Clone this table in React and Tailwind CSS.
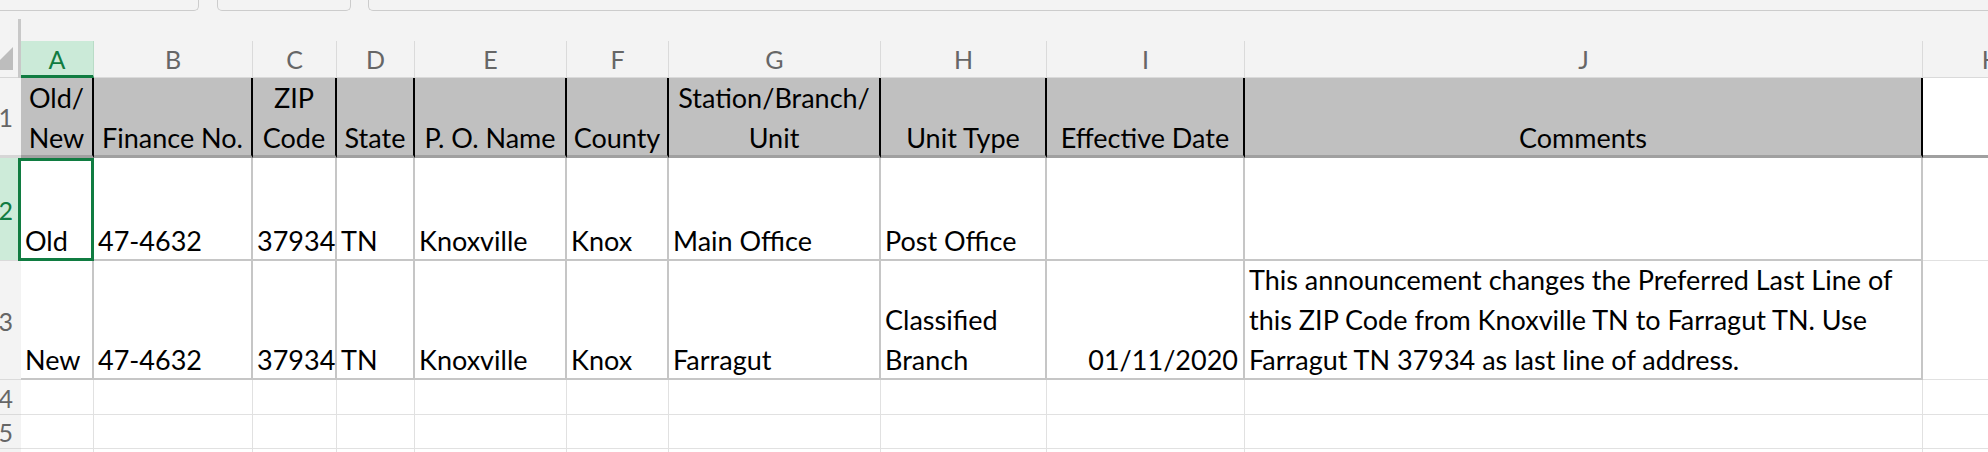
import React from 'react';

// column widths measured off the sheet (border included)
const COLS = [
  { id: 'A', w: 'w-[73px]' },
  { id: 'B', w: 'w-[159px]' },
  { id: 'C', w: 'w-[84px]' },
  { id: 'D', w: 'w-[78px]' },
  { id: 'E', w: 'w-[152px]' },
  { id: 'F', w: 'w-[102px]' },
  { id: 'G', w: 'w-[212px]' },
  { id: 'H', w: 'w-[166px]' },
  { id: 'I', w: 'w-[198px]' },
  { id: 'J', w: 'w-[678px]' },
];

const HEADERS = [
  ['Old/', 'New'],
  ['Finance No.'],
  ['ZIP', 'Code'],
  ['State'],
  ['P. O. Name'],
  ['County'],
  ['Station/Branch/', 'Unit'],
  ['Unit Type'],
  ['Effective Date'],
  ['Comments'],
];

const ROWS = [
  {
    n: 2,
    h: 'h-[103px]',
    cells: [['Old'], ['47-4632'], ['37934'], ['TN'], ['Knoxville'], ['Knox'], ['Main Office'], ['Post Office'], [], []],
  },
  {
    n: 3,
    h: 'h-[119px]',
    cells: [
      ['New'], ['47-4632'], ['37934'], ['TN'], ['Knoxville'], ['Knox'], ['Farragut'],
      ['Classified', 'Branch'],
      ['01/11/2020'],
      [
        'This announcement changes the Preferred Last Line of',
        'this ZIP Code from Knoxville TN to Farragut TN. Use',
        'Farragut TN 37934 as last line of address.',
      ],
    ],
  },
];

const EMPTY_ROWS = [
  { n: 4, h: 'h-[35px]' },
  { n: 5, h: 'h-[34px]' },
  { n: 6, h: 'h-[34px]' },
];

const RowHeader = ({ n, active, thick }) => (
  <div
    className={`w-[21px] h-full shrink-0 flex items-center justify-end overflow-hidden pr-[8px] pt-[2px] text-[25px] leading-none ${
      active ? 'bg-[#cdebd9] text-[#107c41]' : 'bg-[#f3f3f3] text-[#666666]'
    } ${thick ? 'border-b-[3px] border-[#d6d6d6]' : 'border-b border-[#dadada]'}`}
  >
    <span>{n}</span>
  </div>
);

const Lines = ({ lines, shift }) => (
  <div className={`leading-[40px] whitespace-nowrap ${shift}`}>
    {lines.map((l) => (
      <div key={l}>{l}</div>
    ))}
  </div>
);

export default function App() {
  return (
    <div className="w-[1988px] h-[452px] overflow-hidden bg-white font-[Lato,sans-serif] text-[27px] text-black">
      {/* ribbon edge */}
      <div className="h-[19px] bg-[#f3f3f3] flex items-start">
        <div className="w-[199px] h-[11px] border-r border-b border-[#cccccc] rounded-br-[5px]" />
        <div className="w-[134px] h-[11px] ml-[18px] border-x border-b border-[#cccccc] rounded-b-[5px]" />
        <div className="flex-1 h-[11px] ml-[17px] border-l border-b border-[#cccccc] rounded-bl-[5px]" />
      </div>

      {/* column letters */}
      <div className="flex h-[59px] bg-[#f3f3f3]">
        <div className="w-[21px] shrink-0 flex">
          <div className="w-[18px] flex flex-col justify-end">
            <div className="h-[37px] pt-[6px] border-b border-[#d6d6d6]">
              <svg width="13" height="23" viewBox="0 0 13 23" className="block">
                <polygon points="13,0 13,23 0,23 0,13" fill="#bdbdbd" />
              </svg>
            </div>
          </div>
          <div className="w-[3px] bg-[#c8c8c8]" />
        </div>
        <div className="flex-1 flex flex-col justify-end">
          <div className="h-[37px] flex text-[25px] leading-none">
            {COLS.map((c) =>
              c.id === 'A' ? (
                <div
                  key={c.id}
                  className={`${c.w} shrink-0 flex items-center justify-center pt-[3px] bg-[#cbead8] border-r border-[#b9dcc7] border-b-[3px] border-b-[#107c41] text-[#107c41]`}
                >
                  {c.id}
                </div>
              ) : (
                <div
                  key={c.id}
                  className={`${c.w} shrink-0 flex items-center justify-center border-r border-b border-[#dadada] text-[#666666]`}
                >
                  {c.id}
                </div>
              )
            )}
            <div className="w-[134px] shrink-0 flex items-center justify-center border-b border-[#dadada] text-[#666666]">K</div>
          </div>
        </div>
      </div>

      {/* row 1: field titles */}
      <div className="flex h-[80px]">
        <RowHeader n={1} thick />
        {COLS.map((c, i) => (
          <div
            key={c.id}
            className={`${c.w} shrink-0 h-full flex flex-col justify-end items-center text-center bg-[#c0c0c0] border-r-2 border-r-black border-b-[3px] border-b-[#a0a0a0]`}
          >
            <Lines lines={HEADERS[i]} shift="-mb-[3px]" />
          </div>
        ))}
        <div className="w-[134px] shrink-0 h-full bg-white border-b-[3px] border-b-[#a0a0a0]" />
      </div>

      {/* data rows */}
      {ROWS.map((r) => (
        <div key={r.n} className={`flex ${r.h}`}>
          <RowHeader n={r.n} active={r.n === 2} />
          {COLS.map((c, i) => (
            <div
              key={c.id}
              className={`${c.w} shrink-0 h-full relative flex flex-col justify-end border-r-2 border-b-2 border-[#c6c6c6] ${
                c.id === 'I' ? 'items-end pr-[5px]' : 'items-start pl-[4px]'
              }`}
            >
              {r.cells[i].length > 0 && <Lines lines={r.cells[i]} shift="-mb-[2px]" />}
              {r.n === 2 && c.id === 'A' && (
                <div className="absolute -left-[3px] -right-[2px] top-0 -bottom-[2px] z-10 border-[3px] border-[#107c41] pointer-events-none" />
              )}
            </div>
          ))}
          <div className="w-[134px] shrink-0 h-full border-b border-[#e1e1e1]" />
        </div>
      ))}

      {/* empty grid */}
      {EMPTY_ROWS.map((r) => (
        <div key={r.n} className={`flex ${r.h}`}>
          <RowHeader n={r.n} />
          {COLS.map((c) => (
            <div key={c.id} className={`${c.w} shrink-0 h-full border-r border-b border-[#e1e1e1]`} />
          ))}
          <div className="w-[134px] shrink-0 h-full border-r border-b border-[#e1e1e1]" />
        </div>
      ))}
    </div>
  );
}
